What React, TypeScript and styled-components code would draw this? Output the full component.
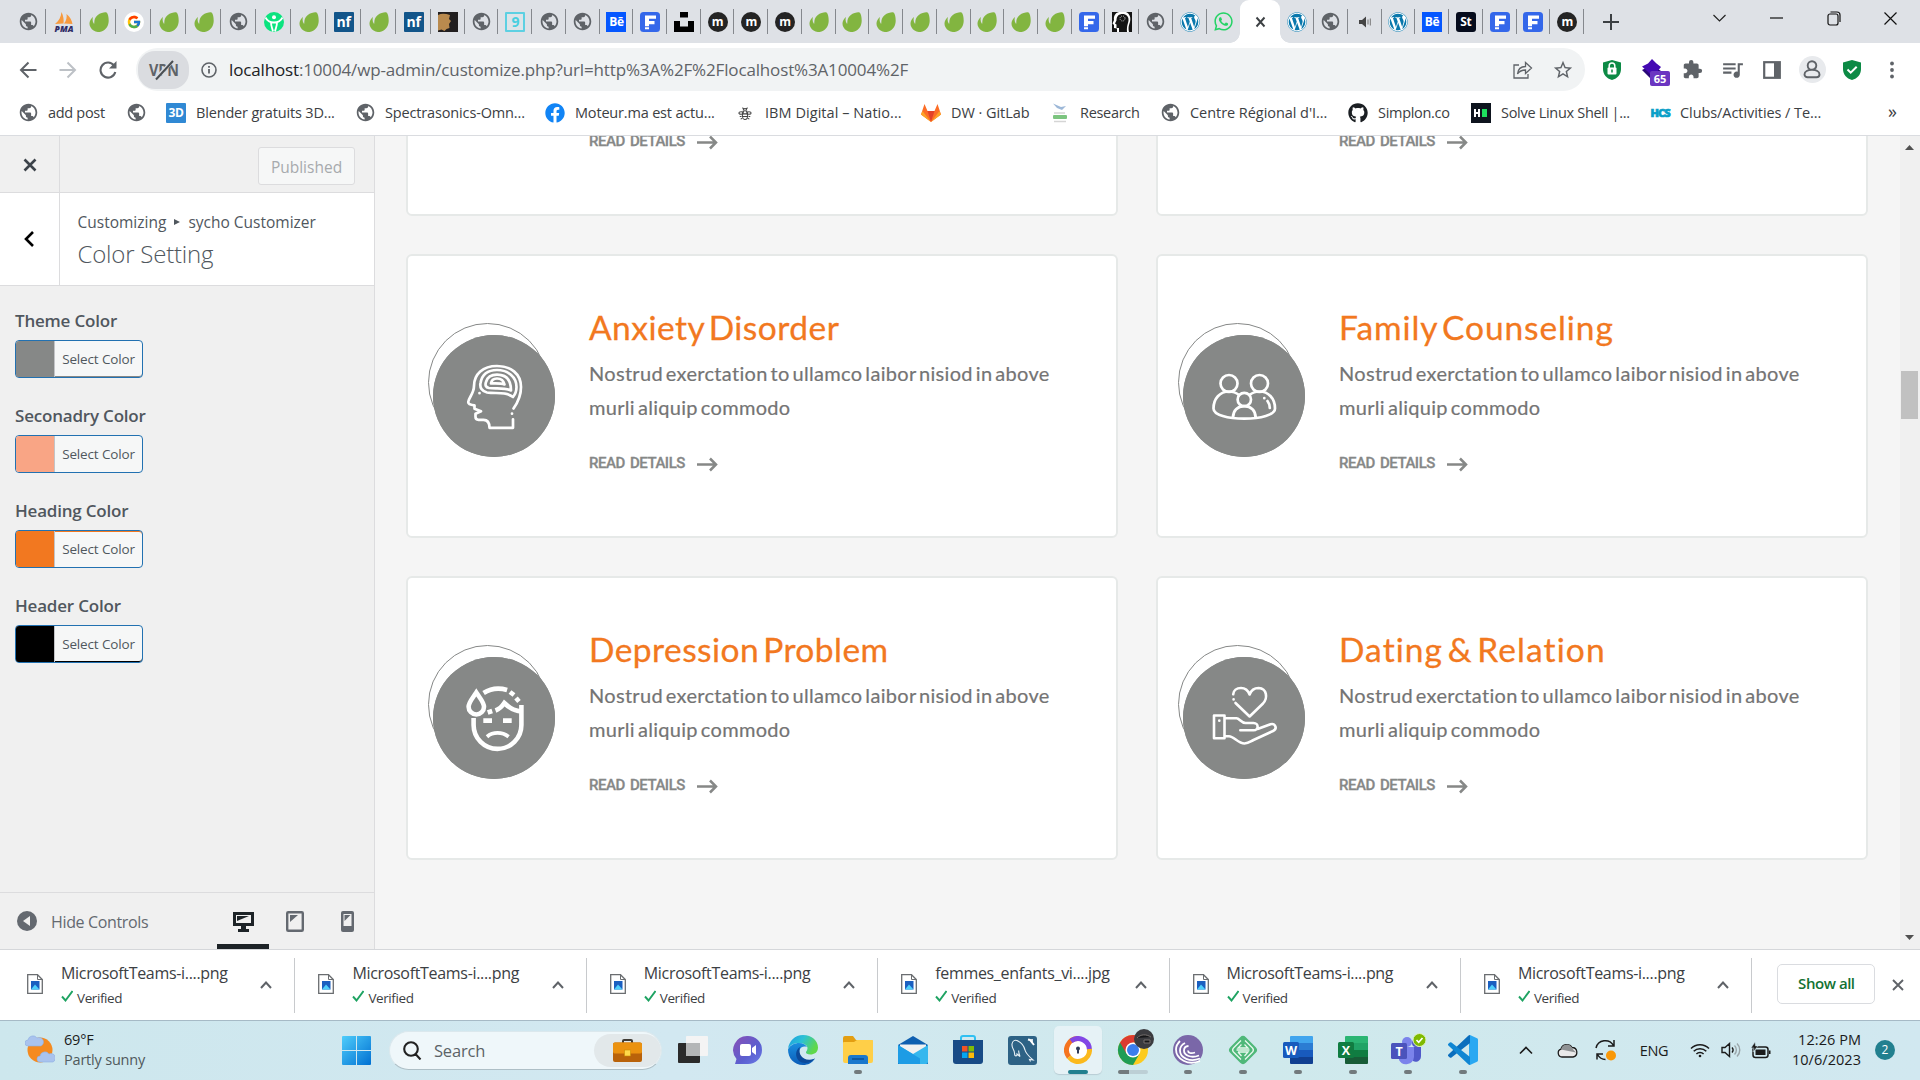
import React from 'react';
import styled, { createGlobalStyle, css } from 'styled-components';
import { MdPublic, MdExtension, MdQueueMusic, MdStarBorder } from 'react-icons/md';
import { FaWordpress, FaWhatsapp, FaGithub, FaFacebook } from 'react-icons/fa';
import { FcGoogle } from 'react-icons/fc';

const UI = `"Open Sans", "Noto Sans", sans-serif`;
const SITE = `Lato, "Open Sans", sans-serif`;

const GlobalStyle = createGlobalStyle`
  *, *::before, *::after { box-sizing: border-box; }
  body { margin: 0; background: #fff; overflow: hidden; }
  svg { display: block; flex: none; }
`;

const Screen = styled.div`
  width: 1920px;
  height: 1080px;
  display: flex;
  flex-direction: column;
  overflow: hidden;
  font-family: ${UI};
  color: #3c4043;
  white-space: nowrap;
`;

/* ---------- tab strip ---------- */

const TabStrip = styled.div`
  height: 43px;
  flex: none;
  display: flex;
  background: #dee1e6;
  padding-left: 11px;
`;

const Tab = styled.div<{ $w: number; $line?: boolean }>`
  width: ${p => p.$w}px;
  flex: none;
  height: 43px;
  display: flex;
  align-items: center;
  justify-content: center;
  background: linear-gradient(#85888d, #85888d) right 0 top 9px / ${p => (p.$line === false ? 0 : 1)}px 25px no-repeat;
`;

const ActiveTab = styled.div`
  width: 40px;
  height: 43px;
  flex: none;
  background: #fff;
  border-radius: 9px 9px 0 0;
  display: flex;
  align-items: center;
  justify-content: center;
  position: relative;
  &::before, &::after {
    content: '';
    position: absolute;
    bottom: 0;
    width: 10px;
    height: 10px;
  }
  &::before { left: -10px; background: radial-gradient(circle at 0 0, transparent 9.5px, #fff 10px); }
  &::after { right: -10px; background: radial-gradient(circle at 100% 0, transparent 9.5px, #fff 10px); }
`;

const WindowControls = styled.div`
  margin-left: auto;
  height: 36px;
  display: flex;
  align-items: center;
  padding-right: 1px;
`;
const WindowButton = styled.div`
  width: 57px;
  display: flex;
  justify-content: center;
`;
const NewTab = styled.div`
  width: 54px;
  display: flex;
  align-items: center;
  justify-content: center;
`;

const Badge = styled.div<{ $bg: string; $fg?: string; $r?: number; $fs?: number; $border?: string }>`
  width: 20px;
  height: 20px;
  flex: none;
  display: flex;
  align-items: center;
  justify-content: center;
  background: ${p => p.$bg};
  color: ${p => p.$fg || '#fff'};
  border-radius: ${p => p.$r ?? 2}px;
  font: 700 ${p => p.$fs || 12}px/18px ${UI};
  letter-spacing: -0.3px;
  ${p => p.$border && css`border: 2px solid ${p.$border};`}
`;

const Globe = () => <MdPublic size={21} color="#5f6368" />;
const Leaf = () => (
  <svg width="20" height="20" viewBox="0 0 20 20">
    <path d="M17.2.4C16 0 11.700.6 8.500 3.200 5.700 5.500 5.200 8.300 5.300 11.300c0 .4-.3.500-.5.200C3.700 10 3.300 8.200 3.800 5.700c.1-.4-.2-.5-.5-.2C.5 8.300-.4 12 1.500 15.300 3.400 18.700 7 20.500 10.700 19.900c5.300-.8 8.300-4.900 8.900-9.700C20 6.700 19.100 2 17.900.7c-.2-.2-.4-.3-.7-.3z" fill="#82b540" />
  </svg>
);
const Pma = () => (
  <svg width="22" height="20" viewBox="0 0 22 20">
    <path d="M2 12C6 9 8 5 8.500 0c2 4 2.500 8 2 11.500zM11 11.500C13.500 8.500 14 5 13.500 2 17 5 19 8.500 19.500 12z" fill="#f79a3e" />
    <text x="11" y="19.500" textAnchor="middle" fontFamily="Open Sans" fontWeight="800" fontStyle="italic" fontSize="8.500" fill="#2f2c66">PMA</text>
  </svg>
);
const Google = () => (
  <svg width="20" height="20" viewBox="0 0 20 20"><circle cx="10" cy="10" r="10" fill="#fff" /><g transform="translate(2.500 2.500)"><FcGoogle size={15} /></g></svg>
);
const GreenPerson = () => (
  <svg width="20" height="20" viewBox="0 0 20 20">
    <circle cx="10" cy="10" r="10" fill="#0be37f" />
    <g fill="none" stroke="#fff" strokeWidth="1.800"><circle cx="10" cy="5.200" r="2" fill="#fff" stroke="none" /><path d="M1.500 5.500c2 4 5 5 8.500 5s6.500-1 8.500-5M7 10.500c0 4 1.500 6 2 9M13 10.500c0 4-1.500 6-2 9" /></g>
  </svg>
);
const Paint = () => (
  <svg width="20" height="20" viewBox="0 0 20 20"><rect width="20" height="20" fill="#221f20" /><path d="M0 3c4-2 8-1 12 0l-1 4 2 2-2 3 .5 4-3 1-2 2-3-1.500-3.500 1z" fill="#b98a4e" /></svg>
);
const FBox = () => (
  <svg width="20" height="20" viewBox="0 0 20 20"><rect width="20" height="20" rx="3.500" fill="#3467ea" /><path d="M5 3.500h11v3.200H9v2.400h5.500v3.200H9v2H5zM5 15.300h4v2H5z" fill="#fff" /></svg>
);
const Unsplash = () => (
  <svg width="20" height="20" viewBox="0 0 20 20"><path d="M6 0h8v5.500H6zM0 9h6v5.500h8V9h6v11H0z" fill="#000" /></svg>
);
const HeadTile = () => (
  <svg width="20" height="20" viewBox="0 0 20 20">
    <rect width="20" height="20" fill="#fff" />
    <path d="M0 0h7C3 1 1.500 4 2 8L.5 11.500 2 13v3l3 .5V20H0zM20 0h-6c4 2 5 6 4 10-1 3-2 5-1 10h3z" fill="#151515" />
    <path d="M7 20v-4H4.500v-3.500L3 11.500l1.500-3C4.500 4 7 2 10.500 2S17 4.500 16.500 8.500c-.3 3-2 5-1.500 11.500z" fill="#151515" />
    <circle cx="10.500" cy="6.500" r="2.500" fill="none" stroke="#ccc" strokeDasharray="1 1" />
  </svg>
);
const Speaker = () => (
  <svg width="14" height="14" viewBox="0 0 14 14"><path d="M1 5h3l4-3.500v11L4 9H1z" fill="#444" /><path d="M10 4.500v5M12.300 3.500v7" stroke="#777" strokeWidth="1" /></svg>
);
const Wp = () => (
  <svg width="20" height="20" viewBox="0 0 20 20"><circle cx="10" cy="10" r="9.800" fill="#fff" /><FaWordpress size={20} color="#0a78ac" /></svg>
);
const Be = () => <Badge $bg="#0557ff" $r={0} $fs={12}>Bē</Badge>;
const MDot = () => <Badge $bg="#242424" $r={10} $fs={12}>m</Badge>;
const Nf = () => <Badge $bg="#12558a" $r={1} $fs={14}>nf</Badge>;
const Nine = () => <Badge $bg="#dde4e8" $fg="#48cfe0" $border="#5dd0e2" $r={1} $fs={14}>9</Badge>;
const St = () => <Badge $bg="#050b1c" $r={3} $fs={12}>St</Badge>;
const Whats = () => <FaWhatsapp size={21} color="#25d366" />;

const earlyTabs = [Globe, Pma, Leaf, Google, Leaf, Leaf, Globe, GreenPerson, Leaf, Nf, Leaf, Nf];
const middleTabs = [Paint, Globe, Nine, Globe, Globe, Be, FBox, Unsplash, MDot, MDot, MDot, Leaf, Leaf, Leaf, Leaf, Leaf, Leaf, Leaf, Leaf, FBox, HeadTile, Globe, Wp, Whats];
const lateTabs = [Wp, Globe, Speaker, Wp, Be, St, FBox, FBox, MDot];

/* ---------- toolbar ---------- */

const Toolbar = styled.div`
  height: 48px;
  flex: none;
  display: flex;
  align-items: center;
  padding: 5px 8px 0;
  background: #fff;
`;
const ToolButton = styled.div`
  width: 40px;
  height: 40px;
  flex: none;
  display: flex;
  align-items: center;
  justify-content: center;
  position: relative;
`;
const Omnibox = styled.div`
  width: 1449px;
  height: 43px;
  margin: 0 7px 0 8px;
  flex: none;
  border-radius: 22px;
  background: #f1f3f4;
  display: flex;
  align-items: center;
  padding: 0 2px 0 2px;
`;
const VpnPill = styled.div`
  width: 51px;
  height: 38px;
  border-radius: 17px;
  background: #dadce0;
  display: flex;
  align-items: center;
  justify-content: center;
`;
const Url = styled.div`
  flex: 1;
  font-size: 17px;
  line-height: 24px;
  letter-spacing: -0.15px;
  color: #5f6368;
  b { font-weight: 400; color: #202124; }
`;
const InfoSlot = styled.div`
  width: 40px;
  display: flex;
  justify-content: center;
`;
const Counter = styled.div`
  position: absolute;
  left: 18px;
  top: 21px;
  width: 20px;
  height: 15px;
  border-radius: 2px;
  background: #6b35c1;
  color: #fff;
  font: 700 11px/15px ${UI};
  text-align: center;
`;
const Avatar = styled.div`
  width: 27px;
  height: 27px;
  border-radius: 50%;
  background: #e8eaed;
  display: flex;
  align-items: center;
  justify-content: center;
`;

/* ---------- bookmarks ---------- */

const Bookmarks = styled.div`
  height: 45px;
  flex: none;
  display: flex;
  align-items: center;
  padding: 0 0 1px 18px;
  background: #fff;
  border-bottom: 1px solid #dadce0;
`;
const Bookmark = styled.div<{ $w: number; $ls?: number }>`
  width: ${p => p.$w}px;
  flex: none;
  display: flex;
  align-items: center;
  gap: 10px;
  font-size: 14.5px;
  line-height: 20px;
  letter-spacing: ${p => p.$ls ?? -0.3}px;
  color: #3c4043;
`;
const BookmarkIcon = styled.div`
  width: 20px;
  display: flex;
  justify-content: center;
`;
const More = styled.div`
  margin-left: auto;
  padding: 0 23px 3px 0;
  font-size: 18px;
  line-height: 20px;
  color: #3c4043;
`;

const Bee = () => (
  <svg width="14" height="16" viewBox="0 0 16 18" fill="none" stroke="#444" strokeWidth="1.200">
    <ellipse cx="8" cy="11.500" rx="3" ry="5" /><path d="M5 10h6M5 13h6M6 6a2 2 0 114 0M5 3l2 1.500M11 3L9 4.500" /><ellipse cx="3.500" cy="9" rx="2.500" ry="1.500" /><ellipse cx="12.500" cy="9" rx="2.500" ry="1.500" /><path d="M2 13h2M12 13h2M3 16l2-1M13 16l-2-1" />
  </svg>
);
const GitLab = () => (
  <svg width="20" height="18" viewBox="0 0 20 18">
    <path d="M10 18L0 10.500 3.500 0l3 7h7l3-7L20 10.500z" fill="#fc6d26" /><path d="M10 18L6.500 7h7z" fill="#e24329" /><path d="M10 18L0 10.500l1.500-3.500zM10 18l10-7.500L18.500 7z" fill="#fca326" />
  </svg>
);
const ResearchIcon = () => (
  <svg width="16" height="20" viewBox="0 0 16 20"><path d="M1 .5l8 3.500 5-1-4 4-5-2z" fill="#9db8d8" /><rect x="1" y="12" width="14" height="4" rx="1" fill="#7cc47f" /><path d="M2 10h11M2 18.500h12" stroke="#d5d5d5" strokeWidth="1.500" /></svg>
);
const HIcon = () => (
  <svg width="20" height="20" viewBox="0 0 20 20"><rect width="20" height="20" fill="#0e141e" /><path d="M4 6v8M8 6v8M4 10h4" stroke="#fff" strokeWidth="2" /><rect x="11" y="6" width="5" height="8" fill="#1ee05f" /></svg>
);
const Hcs = styled.div`
  font: 800 11px/20px ${UI};
  color: #0aa0c8;
  letter-spacing: -0.9px;
  -webkit-text-stroke: 0.7px #0aa0c8;
`;

const bookmarks: { w: number; icon: React.ReactNode; text?: string; ls?: number }[] = [
  { w: 108, icon: <Globe />, text: 'add post' },
  { w: 40, icon: <Globe /> },
  { w: 189, icon: <Badge $bg="#3089d4" $r={1} $fs={12}>3D</Badge>, text: 'Blender gratuits 3D...', ls: -0.17 },
  { w: 190, icon: <Globe />, text: 'Spectrasonics-Omn...', ls: -0.15 },
  { w: 190, icon: <FaFacebook size={20} color="#1184f5" />, text: 'Moteur.ma est actu...', ls: -0.18 },
  { w: 186, icon: <Bee />, text: 'IBM Digital – Natio...', ls: 0.05 },
  { w: 129, icon: <GitLab />, text: 'DW · GitLab', ls: -0.05 },
  { w: 110, icon: <ResearchIcon />, text: 'Research' },
  { w: 188, icon: <Globe />, text: "Centre Régional d'I...", ls: -0.05 },
  { w: 123, icon: <FaGithub size={20} color="#1b1f23" />, text: 'Simplon.co' },
  { w: 179, icon: <HIcon />, text: 'Solve Linux Shell |...' },
  { w: 180, icon: <Hcs>HCS</Hcs>, text: 'Clubs/Activities / Te...', ls: -0.07 },
];

/* ---------- customizer panel ---------- */

const Content = styled.div`
  height: 813px;
  flex: none;
  display: flex;
  overflow: hidden;
`;
const Panel = styled.aside`
  width: 375px;
  flex: none;
  display: flex;
  flex-direction: column;
  background: #f0f0f0;
  border-right: 1px solid #dcdcde;
  color: #50575e;
`;
const PanelTop = styled.div`
  height: 57px;
  flex: none;
  display: flex;
  align-items: center;
  border-bottom: 1px solid #dcdcde;
`;
const SideCell = styled.div`
  width: 60px;
  height: 100%;
  flex: none;
  display: flex;
  align-items: center;
  justify-content: center;
  border-right: 1px solid #dcdcde;
`;
const CloseCell = styled(SideCell)`
  padding: 2px 0 0 1px;
`;
const Published = styled.div`
  margin: 3px 19px 0 auto;
  width: 97px;
  height: 38px;
  border: 1px solid #dcdcde;
  border-radius: 3px;
  background: #f6f7f7;
  color: #a7aaad;
  font-size: 15.500px;
  line-height: 38px;
  text-align: center;
`;
const PanelTitle = styled.div`
  height: 93px;
  flex: none;
  display: flex;
  background: #fff;
  border-bottom: 1px solid #dcdcde;
`;
const TitleText = styled.div`
  padding: 17px 0 0 17.500px;
`;
const Crumb = styled.div`
  font-size: 15.5px;
  line-height: 24px;
  letter-spacing: 0;
  display: flex;
  align-items: center;
  gap: 8px;
`;
const PanelHeading = styled.div`
  font-size: 24px;
  line-height: 36px;
  font-weight: 300;
  letter-spacing: -0.2px;
  margin-top: 2px;
`;
const Controls = styled.div`
  flex: 1;
  padding: 23px 15px 0;
`;
const Control = styled.div`
  height: 95.600px;
`;
const ControlLabel = styled.div`
  font-size: 17px;
  line-height: 24px;
  font-weight: 600;
  letter-spacing: -0.2px;
  margin: -0.5px 0 7.5px;
`;
const ColorButton = styled.div<{ $top?: string; $bottom?: string }>`
  width: 128px;
  height: 38px;
  display: flex;
  border: 1px solid #2271b1;
  border-radius: 4px;
  overflow: hidden;
  background: #f6f7f7;
  box-shadow: inset 0 1px 0 ${p => p.$top || 'transparent'}, inset 0 -1px 0 ${p => p.$bottom || 'transparent'};
`;
const Swatch = styled.div<{ $color: string }>`
  width: 38px;
  background: ${p => p.$color};
`;
const SelectText = styled.div`
  flex: 1;
  border-left: 1px solid #c3c4c7;
  text-align: center;
  font-size: 13.500px;
  line-height: 36px;
  letter-spacing: -0.15px;
`;
const PanelFooter = styled.div`
  height: 57px;
  flex: none;
  display: flex;
  align-items: center;
  border-top: 1px solid #dcdcde;
  padding-left: 17px;
  font-size: 16px;
  color: #646970;
`;
const HideText = styled.div`
  margin: 2px auto 0 14px;
  letter-spacing: -0.35px;
`;
const Device = styled.div<{ $on?: boolean }>`
  width: 52px;
  height: 56px;
  display: flex;
  align-items: center;
  justify-content: center;
  border-bottom: 5px solid ${p => (p.$on ? '#1d2327' : 'transparent')};
  padding-top: 5px;
`;
const Devices = styled.div`
  display: flex;
  padding-right: 1px;
`;

const settings = [
  { label: 'Theme Color', color: '#868887', bottom: '#868887' },
  { label: 'Seconadry Color', color: '#f9a585' },
  { label: 'Heading Color', color: '#f27820', top: '#f27820' },
  { label: 'Header Color', color: '#000', bottom: '#000' },
];

/* ---------- site preview ---------- */

const Preview = styled.main`
  flex: 1;
  overflow: hidden;
  background: #f5f5f5;
  padding: 0 0 0 31px;
`;
const CardGrid = styled.div`
  margin-top: -204px;
  display: grid;
  grid-template-columns: 712px 712px;
  grid-auto-rows: 284px;
  gap: 38px;
`;
const Card = styled.section`
  background: #fff;
  border: 2px solid #e6e9e8;
  border-radius: 6px;
  display: flex;
  padding: 41px 0 0 25px;
`;
const Disc = styled.div`
  width: 122px;
  height: 122px;
  margin: 38px 34px 0 0;
  flex: none;
  border-radius: 50%;
  background: #868887;
  position: relative;
  &::before {
    content: '';
    position: absolute;
    z-index: 0;
    left: -5px;
    top: -12px;
    width: 119px;
    height: 119px;
    border: 1px solid #868887;
    border-radius: 50%;
  }
  svg { position: relative; border-radius: 50%; background: #868887; }
`;
const CardBody = styled.div`
  font-family: ${SITE};
`;
const CardTitle = styled.h3<{ $ls: number }>`
  margin: 0;
  font-size: 33.500px;
  line-height: 60px;
  font-weight: 400;
  color: #f27820;
  word-spacing: -5px;
  letter-spacing: ${p => p.$ls}px;
  -webkit-text-stroke: 0.3px #f27820;
`;
const CardText = styled.p`
  margin: -1px 0 0;
  width: 480px;
  white-space: pre-line;
  font-size: 20px;
  line-height: 34px;
  color: #747474;
  word-spacing: -2.500px;
  letter-spacing: 0.31px;
  -webkit-text-stroke: 0.2px #747474;
`;
const ReadMore = styled.div`
  display: flex;
  align-items: center;
  gap: 12px;
  margin-top: 22px;
  height: 34px;
  font: 500 15px/34px Roboto, sans-serif;
  letter-spacing: -0.48px;
  word-spacing: 2px;
  color: #868887;
  -webkit-text-stroke: 0.3px #868887;
  svg { margin-top: 3px; }
`;
const ScrollBar = styled.div`
  width: 20px;
  flex: none;
  background: #f0f0f0;
  display: flex;
  flex-direction: column;
  align-items: center;
  padding: 9px 1px 9px 0;
`;
const Thumb = styled.div`
  width: 17px;
  height: 48px;
  margin: 221px 0 auto;
  background: #c1c1c1;
`;

const CardArt = ({ children, w = 2.7 }: { children: React.ReactNode; w?: number }) => (
  <svg width="122" height="122" viewBox="0 0 122 122" fill="none" stroke="#fff" strokeWidth={w} strokeLinejoin="round" strokeLinecap="round">{children}</svg>
);
const BrainArt = () => (
  <CardArt>
    <path d="M80.500 73.500c5-7 7.500-14 7.500-21.500C88 39 78 31 64 31S41 39 41 51c0 7.500-5.500 12-5.800 16 0 2.500 3 3 6.300 3.300v3.500l6.500 2.500-5.500 2.500v3c0 2 1 3 3 3h5c4.500 0 6 3.500 6 8h23.500v-8.500M46.500 58v.2M79 78.500v.2" />
    <path d="M80 62c-8-6-17-3-26-4.500-5-1-7.500-5-6.500-9.500C49 39.500 55 35 64 35c11 0 19.500 7 19.500 17 0 4-1 7-3.500 10z" />
    <path d="M78 55.500c-7-3.500-15-1.500-22-2.500-3.500-.7-4-3-3-6 1.500-5 5.500-7.300 11-7.300 8.500 0 14 5 14 15.800z" />
    <path d="M71.500 49.500c-4-1.500-9-1-13.500-1 .5-4 3-5 6-5s6.500 1.500 7.500 6z" />
  </CardArt>
);
const FamilyArt = () => (
  <CardArt>
    <circle cx="46" cy="48.500" r="8.500" /><circle cx="76.500" cy="48.500" r="8.500" /><circle cx="61.300" cy="64.500" r="6.700" />
    <path d="M56 60c-3-2.500-6-3.500-10-3.500-9 0-15.500 7-15.500 17C30.500 80 45 83.700 61.300 83.700S92 80 92 73.500c0-10-6.500-17-15.500-17-4 0-7 1-10 3.500M50 82.500c0-7 4.500-11.300 11.300-11.300S72.600 75.500 72.600 82.500M81.300 63v.2M84.500 66c1.500 2 2.200 4 2.300 7" />
  </CardArt>
);
const DepressionArt = () => (
  <CardArt w={4.6}>
    <g strokeLinecap="butt" strokeLinejoin="miter">
      <path d="M43.300 35.500c-4 6-7.700 10-7.700 14.300a7.700 7.700 0 0015.400 0c0-4.300-3.700-8.300-7.700-14.300zM50.600 36c7-4.500 15-5.500 23.500-3M77 35l4 3M83 41l3 3.500M54.700 55.500l4.500-1.500M62.500 53.500c4-1.500 6.500-4 8.800-7.500 5 5 10 8 17 8.500M40.600 61v7a23.900 23.900 0 0047.800 0V48" />
      <path d="M50.300 63.600H59M70 63.600h8.700" /><path d="M54 79.700c6-5 15-5 21.600 0" strokeWidth="3.800" />
    </g>
  </CardArt>
);
const DatingArt = () => (
  <CardArt w={2.6}>
    <path d="M52.500 46l14.100 13.500L80 46.500c5-5.500 4-15-4.400-15.500-4.500 0-7.500 2.500-9 6.500-1.500-4-4.500-6.500-8.600-6.500-4.500 0-7.500 2.500-7.800 6.300M50.600 42.300v.1" />
    <path d="M31 58.500h10.500v22.700H31zM36.300 63.600v.1M41.500 61.300h12c3 0 4.500 4.700 9 4.700h8c5.500 0 5.500 7.300 0 7.300H57.300M41.500 79.200h4.500c5 0 9 7.300 15.500 7.300 4 0 6-2 9-3.500L90 74c5-2.500 2-8-2.500-6.800L74.500 72" />
  </CardArt>
);

const blurb = 'Nostrud exerctation to ullamco laibor nisiod in above\nmurli aliquip commodo';
const cards: { title: string; ls: number; art: React.ReactNode }[] = [
  { title: 'Anxiety Disorder', ls: 0.5, art: <BrainArt /> },
  { title: 'Family Counseling', ls: 0.9, art: <FamilyArt /> },
  { title: 'Anxiety Disorder', ls: 0.5, art: <BrainArt /> },
  { title: 'Family Counseling', ls: 0.9, art: <FamilyArt /> },
  { title: 'Depression Problem', ls: 0.45, art: <DepressionArt /> },
  { title: 'Dating & Relation', ls: 1.08, art: <DatingArt /> },
];

/* ---------- downloads ---------- */

const Shelf = styled.div`
  height: 71px;
  flex: none;
  display: flex;
  align-items: center;
  background: #fff;
  border-top: 1px solid #d5d7da;
  padding-left: 4px;
`;
const Download = styled.div`
  width: 291.400px;
  height: 55px;
  flex: none;
  display: flex;
  border-right: 1px solid #c8cacd;
  padding: 0 20px 0 23px;
`;
const FileIcon = styled.div`
  width: 34px;
  padding-top: 16px;
`;
const FileText = styled.div`
  flex: 1;
`;
const FileName = styled.div`
  font-size: 16px;
  line-height: 22px;
  letter-spacing: -0.32px;
  margin-top: 4px;
`;
const Verified = styled.div`
  display: flex;
  align-items: center;
  gap: 4px;
  font-size: 13.500px;
  line-height: 20px;
  letter-spacing: -0.4px;
  margin-top: 4px;
  svg { margin-top: -3px; }
`;
const ChevronSlot = styled.div`
  padding: 23px 2px 0 0;
`;
const ShowAll = styled.div`
  width: 98px;
  height: 40px;
  margin: -2px 0 0 25px;
  border: 1px solid #dadce0;
  border-radius: 5px;
  color: #137333;
  font-size: 15px;
  font-weight: 600;
  letter-spacing: -0.45px;
  line-height: 37px;
  text-align: center;
`;
const ShelfClose = styled.div`
  margin: -1px auto 0;
`;

const files = ['MicrosoftTeams-i....png', 'MicrosoftTeams-i....png', 'MicrosoftTeams-i....png', 'femmes_enfants_vi....jpg', 'MicrosoftTeams-i....png', 'MicrosoftTeams-i....png'];

/* ---------- taskbar ---------- */

const Taskbar = styled.div`
  height: 60px;
  flex: none;
  display: flex;
  align-items: center;
  background: linear-gradient(90deg, #cde7ed, #d2e8f1 35%, #cfe9ec 65%, #d1e8f0);
  border-top: 1px solid #a6bac6;
  padding-bottom: 1px;
  color: #1b1b1b;
`;
const Weather = styled.div`
  width: 342px;
  flex: none;
  padding-left: 25px;
  display: flex;
  align-items: center;
  gap: 9px;
  font-size: 14.500px;
  line-height: 20px;
  letter-spacing: -0.2px;
  span { display: block; color: #50595c; }
`;
const SearchBox = styled.div`
  width: 273px;
  flex: none;
  height: 39px;
  margin: 0 3px 0 18px;
  border-radius: 20px;
  background: #eff7fa;
  border: 1px solid #dbe8ed;
  border-bottom-color: #aebfc6;
  display: flex;
  align-items: center;
  padding-left: 13px;
  font-size: 16.500px;
  color: #5c6367;
`;
const SearchText = styled.div`
  margin: 0 auto 0 12px;
  letter-spacing: -0.2px;
`;
const Briefcase = styled.div`
  width: 67px;
  height: 33px;
  border-radius: 17px;
  background: #e2e8ea;
  display: flex;
  justify-content: center;
  align-items: center;
`;
const TaskApp = styled.div<{ $on?: boolean }>`
  width: 48px;
  height: 48px;
  margin: 0 3.500px;
  flex: none;
  border-radius: 5px;
  background: ${p => (p.$on ? '#e6f2f6' : 'transparent')};
  box-shadow: ${p => (p.$on ? '0 1px 1px #b9cdd4' : 'none')};
  display: flex;
  align-items: center;
  justify-content: center;
  position: relative;
`;
const RunMark = styled.i<{ $w: number; $c: string }>`
  position: absolute;
  left: 50%;
  bottom: 0;
  width: ${p => p.$w}px;
  height: 4px;
  border-radius: 2px;
  background: ${p => p.$c};
  transform: translateX(-50%);
`;
const Tray = styled.div`
  flex: 1;
  min-width: 0;
  display: flex;
  align-items: center;
  padding: 0 25px 0 0;
`;
const TraySlot = styled.div<{ $w: number }>`
  width: ${p => p.$w}px;
  flex: none;
  display: flex;
  justify-content: center;
  font-size: 14.500px;
  letter-spacing: -0.3px;
`;
const Clock = styled.div`
  margin-left: auto;
  text-align: right;
  font-size: 14.500px;
  line-height: 20px;
  letter-spacing: 0.05px;
`;
const Notice = styled.div`
  width: 20px;
  height: 20px;
  flex: none;
  margin-left: 14px;
  border-radius: 50%;
  background: #22808f;
  color: #fff;
  font-size: 12px;
  line-height: 19px;
  text-align: center;
`;

const TaskView = () => (
  <svg width="30" height="30" viewBox="0 0 30 30"><rect x="0" y="8" width="22" height="20" rx="1" fill="#2b2b2b" /><rect x="8" y="1" width="22" height="20" rx="1" fill="#f4f4f4" /><path d="M8 8h14v13H8z" fill="#b4b6b7" /></svg>
);
const Chat = () => (
  <svg width="30" height="30" viewBox="0 0 30 30"><defs><linearGradient id="chat" x1="0" y1="0" x2="1" y2="1"><stop offset="0" stopColor="#8a4fb5" /><stop offset=".6" stopColor="#5b5fd0" /><stop offset="1" stopColor="#6a7be6" /></linearGradient></defs><path d="M15 1a14 14 0 110 28H2l1.500-5A14 14 0 0115 1z" fill="url(#chat)" /><rect x="7" y="9" width="11" height="12" rx="2" fill="#fff" /><path d="M19 13l4-3v10l-4-3z" fill="#fff" /></svg>
);
const Edge = () => (
  <svg width="30" height="30" viewBox="0 0 30 30"><defs><linearGradient id="edgeA" x1="0" y1="0" x2="1" y2=".4"><stop offset="0" stopColor="#1b9de2" /><stop offset=".5" stopColor="#2cc1d5" /><stop offset="1" stopColor="#5fd84a" /></linearGradient><linearGradient id="edgeB" x1="0" y1="0" x2="0" y2="1"><stop offset="0" stopColor="#1a8fe0" /><stop offset="1" stopColor="#0b5cb8" /></linearGradient></defs>
    <path d="M0 14C1 6 7 0 15 0c9 0 15 6 15 12.500 0 5-4 7-7.500 7-3 0-5-1-4.500-2.500.5-1 1.500-2 1.500-4C19.500 10 15 8 11 8 6 8 2 10 0 14z" fill="url(#edgeA)" />
    <path d="M0 14.500C2 10 7 8 11 8c4 0 7 2 8 4-6-2-9 3-7 8s9 7 15 3.500C24 28 20 30 15 30 6 30 0 23 0 14.500z" fill="url(#edgeB)" /><path d="M12 12c-5 3-5 10-1 14 4 3 11 3 16-2.500-6 2.500-12 1-14.500-3.500-1.500-3-1.300-6-.5-8z" fill="#0c4a9a" /></svg>
);
const Explorer = () => (
  <svg width="30" height="28" viewBox="0 0 30 28"><path d="M0 2a2 2 0 012-2h8l3 4h15a2 2 0 012 2v8H0z" fill="#e39e12" /><path d="M0 7a1 1 0 011-1h10l3-2h15a1 1 0 011 1v20a2 2 0 01-2 2H2a2 2 0 01-2-2z" fill="#ffcf48" /><path d="M5 22a3 3 0 013-3h14a3 3 0 013 3v6H5z" fill="#1a78cd" /><path d="M9 23h12" stroke="#0b4f93" strokeWidth="1.500" /></svg>
);
const Mail = () => (
  <svg width="30" height="28" viewBox="0 0 30 28"><path d="M0 9L15 0l15 9v19H0z" fill="#0f5fb0" /><path d="M2 8.500h26V20H2z" fill="#f1f1f1" /><path d="M0 9l15 9L30 9v17a2 2 0 01-2 2H2a2 2 0 01-2-2z" fill="#35b7ee" /><path d="M0 9l22 13.500V28H2a2 2 0 01-2-2z" fill="#1d9ce5" /></svg>
);
const Store = () => (
  <svg width="30" height="30" viewBox="0 0 30 30"><path d="M8 6V3a2 2 0 012-2h10a2 2 0 012 2v3" fill="none" stroke="#2fc0f2" strokeWidth="2" /><path d="M0 5h30v21a3 3 0 01-3 3H3a3 3 0 01-3-3z" fill="#184b86" /><path d="M9 11h5.500v5.500H9z" fill="#f35325" /><path d="M15.500 11H21v5.500h-5.500z" fill="#81bc06" /><path d="M9 17.500h5.500V23H9z" fill="#05a6f0" /><path d="M15.500 17.500H21V23h-5.500z" fill="#ffba08" /></svg>
);
const MySql = () => (
  <svg width="29" height="29" viewBox="0 0 29 29"><rect width="29" height="29" rx="3" fill="#2d6285" /><path d="M4 8c.5-3.500 3-4.500 6-3 4 2 6 5 7 9 .7 3.500 3.500 6 8 10l-3.500-.5 1 2M4 8c-.5 4.500 2.500 5.500 2.500 9 0 1.500.5 3 1.500 3s1-1 1-2l3 2.500c-1-2.500-1.500-4-1.300-6" fill="none" stroke="#e8f0f5" strokeWidth="1.100" /><path d="M20 3.500l2 .5 4 5" stroke="#fff" strokeWidth="2" fill="none" /><path d="M24 3v3" stroke="#fff" strokeWidth="1.600" /></svg>
);
const Shielded = () => (
  <svg width="28" height="28" viewBox="0 0 28 28" fill="none"><circle cx="14" cy="14" r="12" fill="#fff" /><path d="M14 2.500a11.500 11.500 0 00-9 18.600" stroke="#f5741f" strokeWidth="5" /><path d="M7 5a11.500 11.500 0 0118.500 9" stroke="#8247e5" strokeWidth="5" /><path d="M25.500 13A11.500 11.500 0 015 21" stroke="#fbb91d" strokeWidth="5" /><path d="M7.500 8.500L14 6.500l6.500 2c.5 6-1.500 10.500-6.500 13.500-5-3-7-7.500-6.500-13.500z" fill="#fff" /><circle cx="14" cy="12.500" r="2" fill="#2e3a59" /><path d="M14 13v4.500" stroke="#2e3a59" strokeWidth="2" /></svg>
);
const Chrome = () => (
  <svg width="42" height="42" viewBox="0 0 42 42"><circle cx="21" cy="21" r="15" fill="#fccb1f" /><path d="M21 21L8 13.500a15 15 0 0013 22.500l6.500-11.200z" fill="#1f9d55" /><path d="M21 13.500h13A15 15 0 008 13.500l6.500 11.200z" fill="#dc3b30" /><circle cx="21" cy="21" r="7.500" fill="#fff" /><circle cx="21" cy="21" r="6" fill="#3b7ded" /><circle cx="32" cy="10" r="10" fill="#3b3b3f" /><path d="M25 9c4-4 9-4 14-1M32 11h6v3h-6z" stroke="#77716f" fill="#161618" /></svg>
);
const BitTorrent = () => (
  <svg width="30" height="30" viewBox="0 0 30 30" fill="none"><circle cx="15" cy="15" r="15" fill="#7a67a8" /><g stroke="#fff" strokeWidth="1.800"><path d="M27 26C15 31 3 24 3 14.500 3 11 5 8 7 6M27 23.500C17 27.500 7 23 7 15.500 7 12 9 9.500 12 8M26 20.500c-8 3-15 0-15-5 0-2.500 2-4.300 4.500-4.500M22 17.500c-4 1.500-7 .5-7-2" /></g></svg>
);
const GreenDiamond = () => (
  <svg width="30" height="30" viewBox="0 0 30 30" fill="none"><rect x="4" y="4" width="22" height="22" rx="4" transform="rotate(45 15 15)" fill="#4fb879" /><g stroke="#e8f7ee" strokeWidth="1.300"><path d="M13 5.500L5.500 13a3 3 0 000 4l7.500 7.500M17 5.500l7.500 7.500a3 3 0 010 4L17 24.500M13.500 9.500L10 13h10l-3.500-3.500M8.500 15h13M10 17h10l-3.500 4M10 17l3.500 4" /></g></svg>
);
const OfficeTile = ({ letter, c }: { letter: string; c: string[] }) => (
  <svg width="30" height="28" viewBox="0 0 30 28"><path d="M7 1a1 1 0 011-1h21a1 1 0 011 1v6H7z" fill={c[0]} /><path d="M7 7h23v7H7z" fill={c[1]} /><path d="M7 14h23v7H7z" fill={c[2]} /><path d="M7 21h23v6a1 1 0 01-1 1H8a1 1 0 01-1-1z" fill={c[3]} /><rect x="0" y="6" width="16" height="16" rx="1.500" fill={c[4]} /><text x="8" y="18.800" textAnchor="middle" fontFamily="Open Sans" fontWeight="700" fontSize="12.500" fill="#fff">{letter}</text></svg>
);
const Teams = () => (
  <svg width="38" height="34" viewBox="0 0 38 34"><circle cx="18" cy="9" r="5" fill="#7b83eb" /><circle cx="27" cy="10" r="4" fill="#5059c9" /><path d="M22 14h10v9c0 5-5 7-8 5z" fill="#5059c9" /><path d="M10 14h15v10a8 8 0 01-15 3z" fill="#7b83eb" /><rect x="2" y="10" width="16" height="16" rx="1.500" fill="#4b53bc" /><text x="10" y="22.500" textAnchor="middle" fontFamily="Open Sans" fontWeight="700" fontSize="12.500" fill="#fff">T</text><circle cx="30.500" cy="7" r="6.500" fill="#7fba00" stroke="#dff0c4" /><path d="M27.500 7l2.200 2.300L33.500 5" fill="none" stroke="#fff" strokeWidth="1.700" /></svg>
);
const VsCode = () => (
  <svg width="30" height="30" viewBox="0 0 30 30"><path d="M22 0l7 3.300a1.500 1.500 0 011 1.400v20.600a1.500 1.500 0 01-1 1.400L22 30l-1-1V1z" fill="#2aa8f2" /><path d="M22 0v8L3.500 22.500a1.300 1.300 0 01-1.700 0L.4 21.200a1.200 1.200 0 010-1.800L20.500.6z" fill="#0a6ebd" /><path d="M22 30v-8L3.500 7.500a1.300 1.300 0 00-1.700 0L.4 8.800a1.200 1.200 0 000 1.800l20.100 18.800z" fill="#0f86d3" /></svg>
);

const GREY = '#727a7d';
const apps: { icon: React.ReactNode; mark?: 'dot' | 'on' | 'multi' }[] = [
  { icon: <TaskView /> },
  { icon: <Chat /> },
  { icon: <Edge /> },
  { icon: <Explorer />, mark: 'dot' },
  { icon: <Mail /> },
  { icon: <Store /> },
  { icon: <MySql /> },
  { icon: <Shielded />, mark: 'on' },
  { icon: <Chrome />, mark: 'multi' },
  { icon: <BitTorrent />, mark: 'dot' },
  { icon: <GreenDiamond />, mark: 'dot' },
  { icon: <OfficeTile letter="W" c={['#41a5ee', '#2b7cd3', '#185abd', '#103f91', '#185abd']} />, mark: 'dot' },
  { icon: <OfficeTile letter="X" c={['#2bb573', '#21a366', '#107c41', '#185c37', '#107c41']} />, mark: 'dot' },
  { icon: <Teams />, mark: 'dot' },
  { icon: <VsCode />, mark: 'dot' },
];

const Line = ({ d, w = 20, h = 20, s = 2, c = '#5f6368', fill = 'none' }: { d: string; w?: number; h?: number; s?: number; c?: string; fill?: string }) => (
  <svg width={w} height={h} viewBox={`0 0 ${w} ${h}`} fill={fill} stroke={c} strokeWidth={s}><path d={d} /></svg>
);

export default function App() {
  return (
    <Screen>
      <GlobalStyle />
      <TabStrip>
        {earlyTabs.map((I, i) => <Tab key={i} $w={35}><I /></Tab>)}
        {middleTabs.map((I, i) => <Tab key={i} $w={33.72} $line={i !== 23}><I /></Tab>)}
        <ActiveTab><Line d="M1.500 1.500l8 9M9.500 1.500l-8 9" w={11} h={12} c="#3c4043" s={1.900} /></ActiveTab>
        {lateTabs.map((I, i) => <Tab key={i} $w={33.750}><I /></Tab>)}
        <NewTab><Line d="M8 0v16M0 8h16" w={16} h={16} c="#3c4043" s={2} /></NewTab>
        <WindowControls>
          <WindowButton><Line d="M.5 1l6 6 6-6" w={13} h={8} c="#222" s={1.200} /></WindowButton>
          <WindowButton><Line d="M0 1h13" w={13} h={2} c="#111" s={1.200} /></WindowButton>
          <WindowButton><Line d="M1 5a2 2 0 012-2h6a2 2 0 012 2v7a2 2 0 01-2 2H3a2 2 0 01-2-2zM3.500 1H10a3 3 0 013 3v7" w={14} h={15} c="#111" s={1.200} /></WindowButton>
          <WindowButton><Line d="M.5.5l12 12M12.500.5l-12 12" w={13} h={13} c="#111" s={1.200} /></WindowButton>
        </WindowControls>
      </TabStrip>

      <Toolbar>
        <ToolButton><Line d="M17.500 9H2M9.500 1.500L2 9l7.500 7.500" w={18} h={18} /></ToolButton>
        <ToolButton><Line d="M.5 9H16M8.500 1.500L16 9l-7.500 7.500" w={18} h={18} c="#bdc1c6" /></ToolButton>
        <ToolButton><svg width="18" height="18" viewBox="0 0 18 18"><path d="M15 4.500A7.500 7.500 0 1016.300 11" fill="none" stroke="#5f6368" strokeWidth="2.100" /><path d="M17.500 0v7.500H10z" fill="#5f6368" /></svg></ToolButton>
        <Omnibox>
          <VpnPill>
            <svg width="32" height="22" viewBox="0 0 32 22"><text x="16" y="17" textAnchor="middle" fontFamily="Open Sans" fontWeight="700" fontSize="15.500" textLength="30" lengthAdjust="spacingAndGlyphs" fill="#5f6368">VPN</text><path d="M8.500 19L24.500 2" stroke="#dadce0" strokeWidth="4" /><path d="M8 20.500L25 2" stroke="#4a4e52" strokeWidth="2" /></svg>
          </VpnPill>
          <InfoSlot><svg width="16" height="16" viewBox="0 0 16 16"><circle cx="8" cy="8" r="7" fill="none" stroke="#5f6368" strokeWidth="1.600" /><path d="M8 7v4.500M8 4v1.700" stroke="#5f6368" strokeWidth="1.800" /></svg></InfoSlot>
          <Url><b>localhost</b>:10004/wp-admin/customize.php?url=http%3A%2F%2Flocalhost%3A10004%2F</Url>
          <ToolButton><Line d="M6 5H1v13h14v-4M4.500 14c.5-5 3-7.500 8-7.500V2.500L18.500 8l-6 5.500V10c-4 0-6 1-8 4z" w={20} h={20} s={1.300} /></ToolButton>
          <ToolButton><MdStarBorder size={22} color="#5f6368" /></ToolButton>
        </Omnibox>
        <ToolButton><svg width="18" height="20" viewBox="0 0 18 20"><path d="M9 0l9 2.500V9c0 5.500-3.500 9.500-9 11-5.500-1.500-9-5.500-9-11V2.500z" fill="#0c8a45" /><rect x="4.500" y="7.500" width="9" height="7" rx="1" fill="#fff" /><path d="M6.200 8V5.800a2.800 2.800 0 015.600 0V8" fill="none" stroke="#fff" strokeWidth="1.500" /><path d="M9 9.500v3" stroke="#0c8a45" strokeWidth="1.500" /></svg></ToolButton>
        <ToolButton>
          <svg width="22" height="22" viewBox="0 0 22 22"><path d="M1 11l10 10 9-9-9-6z" fill="#2a0878" /><path d="M11 0l4.500 4.500L20 8l-4.500 5.500L11 17l-4.500-4.500L1 7.500l6-3z" fill="#4409b3" /></svg>
          <Counter>65</Counter>
        </ToolButton>
        <ToolButton><MdExtension size={21} color="#5f6368" /></ToolButton>
        <ToolButton><MdQueueMusic size={25} color="#5f6368" /></ToolButton>
        <ToolButton><svg width="18" height="18" viewBox="0 0 18 18"><rect x="1.200" y="1.200" width="15.600" height="15.600" fill="#fff" stroke="#5f6368" strokeWidth="2.200" /><path d="M11 1h6v16h-6z" fill="#5f6368" /></svg></ToolButton>
        <ToolButton><Avatar><Line d="M9 1.200a4.300 4.300 0 110 8.600 4.300 4.300 0 010-8.600zM1.500 14.500c0-3 3.500-4.700 7.500-4.700s7.500 1.700 7.500 4.700c0 1.800-1.500 2.700-3 2.700h-9c-1.500 0-3-.9-3-2.700z" w={18} h={19} s={1.900} /></Avatar></ToolButton>
        <ToolButton><svg width="18" height="20" viewBox="0 0 18 20"><path d="M9 0l9 2.500V9c0 5.500-3.500 9.500-9 11-5.500-1.500-9-5.500-9-11V2.500z" fill="#0c8a45" /><path d="M4.500 9.500l3.200 3.200 6-6" fill="none" stroke="#fff" strokeWidth="2" /></svg></ToolButton>
        <ToolButton><svg width="6" height="18" viewBox="0 0 6 18" fill="#5f6368"><circle cx="3" cy="2.500" r="1.900" /><circle cx="3" cy="9" r="1.900" /><circle cx="3" cy="15.500" r="1.900" /></svg></ToolButton>
      </Toolbar>

      <Bookmarks>
        {bookmarks.map((b, i) => (
          <Bookmark key={i} $w={b.w} $ls={b.ls}><BookmarkIcon>{b.icon}</BookmarkIcon>{b.text}</Bookmark>
        ))}
        <More>»</More>
      </Bookmarks>

      <Content>
        <Panel>
          <PanelTop>
            <CloseCell><Line d="M1.500 1.500l11 11M12.500 1.500l-11 11" w={14} h={14} c="#3c434a" s={2.600} /></CloseCell>
            <Published>Published</Published>
          </PanelTop>
          <PanelTitle>
            <SideCell><Line d="M9 1L2 8l7 7" w={11} h={16} c="#000" s={2.600} /></SideCell>
            <TitleText>
              <Crumb>Customizing<Line d="M0 0l6 3-6 3z" w={6} h={6} s={0} fill="#50575e" /><span>sycho Customizer</span></Crumb>
              <PanelHeading>Color Setting</PanelHeading>
            </TitleText>
          </PanelTitle>
          <Controls>
            {settings.map(s => (
              <Control key={s.label}>
                <ControlLabel>{s.label}</ControlLabel>
                <ColorButton $top={s.top} $bottom={s.bottom}><Swatch $color={s.color} /><SelectText>Select Color</SelectText></ColorButton>
              </Control>
            ))}
          </Controls>
          <PanelFooter>
            <svg width="20" height="20" viewBox="0 0 20 20"><circle cx="10" cy="10" r="10" fill="#646970" /><path d="M13 5v10l-7-5z" fill="#f0f0f0" /></svg>
            <HideText>Hide Controls</HideText>
            <Devices>
              <Device $on><svg width="21" height="21" viewBox="0 0 21 21"><path d="M0 1h21v14h-8v3h3v3H5v-3h3v-3H0z" fill="#1d2327" /><path d="M3 4h15v8H3z" fill="#f0f0f0" /><path d="M4 5h12L4 10z" fill="#1d2327" /></svg></Device>
              <Device><svg width="18" height="21" viewBox="0 0 18 21"><rect x="1.200" y="1.200" width="15.600" height="18.600" rx="1" fill="none" stroke="#646970" strokeWidth="2.400" /><path d="M4 4h8l-8 7z" fill="#646970" /></svg></Device>
              <Device><svg width="13" height="21" viewBox="0 0 13 21"><rect width="13" height="21" rx="2" fill="#646970" /><path d="M2.500 3h8v12h-8z" fill="#f0f0f0" /><path d="M3.500 4h6l-6 6z" fill="#646970" /></svg></Device>
            </Devices>
          </PanelFooter>
        </Panel>
        <Preview>
          <CardGrid>
            {cards.map((c, i) => (
              <Card key={i}>
                <Disc>{c.art}</Disc>
                <CardBody>
                  <CardTitle $ls={c.ls}>{c.title}</CardTitle>
                  <CardText>{blurb}</CardText>
                  <ReadMore>READ DETAILS<Line d="M0 7.500h19M13 1.500l6 6-6 6" w={21} h={15} s={2.500} c="#868887" /></ReadMore>
                </CardBody>
              </Card>
            ))}
          </CardGrid>
        </Preview>
        <ScrollBar>
          <Line d="M0 5l4.500-5L9 5z" w={9} h={5} s={0} fill="#505050" />
          <Thumb />
          <Line d="M0 0l4.500 5L9 0z" w={9} h={5} s={0} fill="#505050" />
        </ScrollBar>
      </Content>

      <Shelf>
        {files.map((f, i) => (
          <Download key={i}>
            <FileIcon><svg width="16" height="20" viewBox="0 0 16 20"><path d="M.7.700H10.500L15.300 5.500v13.800H.7z" fill="#fff" stroke="#6a6d70" strokeWidth="1.300" /><path d="M10.500.7v4.800h4.800" fill="none" stroke="#6a6d70" /><rect x="4" y="7" width="8.500" height="8.500" fill="#1b5fc0" /><path d="M4 15.500l4-5 4.500 5z" fill="#4fd0fb" /></svg></FileIcon>
            <FileText>
              <FileName>{f}</FileName>
              <Verified><Line d="M1 6.500l3.500 4L11.500 1" w={12} h={12} c="#1ea362" s={1.900} />Verified</Verified>
            </FileText>
            <ChevronSlot><Line d="M1 7l5-5.500L11 7" w={12} h={8} s={2} /></ChevronSlot>
          </Download>
        ))}
        <ShowAll>Show all</ShowAll>
        <ShelfClose><Line d="M1 1l10 10M11 1L1 11" w={12} h={12} s={1.900} /></ShelfClose>
      </Shelf>

      <Taskbar>
        <Weather>
          <svg width="30" height="30" viewBox="0 0 30 30"><circle cx="15" cy="15" r="12.500" fill="#f58a1f" /><path d="M3 11a3 3 0 010-6 5 5 0 019-2 4 4 0 014 8zM15 27a3 3 0 010-6 5 5 0 019-2 4 4 0 014 8z" fill="#a9c3ee" stroke="#8eaee2" strokeWidth=".6" /></svg>
          <div>69°F<span>Partly sunny</span></div>
        </Weather>
        <svg width="29" height="29" viewBox="0 0 29 29"><defs><linearGradient id="win" x1="0" y1="0" x2="1" y2="1"><stop offset="0" stopColor="#4fcdfb" /><stop offset="1" stopColor="#0070d2" /></linearGradient></defs><path d="M1 0h13v14H0V1a1 1 0 011-1zM15 0h13a1 1 0 011 1v13H15zM0 15h14v14H1a1 1 0 01-1-1zM15 15h14v13a1 1 0 01-1 1H15z" fill="url(#win)" /></svg>
        <SearchBox>
          <Line d="M8 1.200a6.800 6.800 0 110 13.600A6.800 6.800 0 018 1.200zM12.500 13l5 5.500" w={19} h={19} c="#222" s={2.100} />
          <SearchText>Search</SearchText>
          <Briefcase><svg width="29" height="23" viewBox="0 0 29 23"><path d="M10 4V2a1 1 0 011-1h7a1 1 0 011 1v2" fill="none" stroke="#3f3a34" strokeWidth="2" /><rect y="3.500" width="29" height="19.500" rx="2" fill="#b9620a" /><path d="M0 5.500a2 2 0 012-2h25a2 2 0 012 2V13a2 2 0 01-2 1.500H2A2 2 0 010 13z" fill="#eb9210" /><rect x="11.500" y="11" width="6" height="6" fill="#ffd94a" stroke="#c98a00" strokeWidth=".6" /></svg></Briefcase>
        </SearchBox>
        {apps.map((a, i) => (
          <TaskApp key={i} $on={a.mark === 'on'}>
            {a.icon}
            {a.mark === 'dot' && <RunMark $w={8} $c={GREY} />}
            {a.mark === 'on' && <RunMark $w={20} $c="#22808f" />}
            {a.mark === 'multi' && <RunMark $w={30} $c={`linear-gradient(90deg, ${GREY} 11px, #bccfd5 11px)`} />}
          </TaskApp>
        ))}
        <Tray>
          <TraySlot $w={72}><Line d="M1 7.500L7 1.500l6 6" w={14} h={9} c="#1b1b1b" s={1.600} /></TraySlot>
          <TraySlot $w={10}><svg width="21" height="15" viewBox="0 0 21 15"><path d="M5 14a4 4 0 01-1-7.800A6 6 0 0115 4.500 4.800 4.800 0 0116 14z" fill="#e9e9e9" stroke="#1b1b1b" strokeWidth="1.300" /><path d="M4 6.500A6 6 0 0115 4.500c1 2 3 4 4 5z" fill="#8f9294" /></svg></TraySlot>
          <TraySlot $w={67.500}><svg width="22" height="22" viewBox="0 0 22 22" fill="none" stroke="#1b1b1b" strokeWidth="1.500"><path d="M1 9a9.500 9.500 0 0117.500-2.500M19 1v6h-6M2 20.500V15h6M2.500 15.500c2 3.500 4.500 5 8 5" /><circle cx="16" cy="16.500" r="5" fill="#f99808" stroke="none" /></svg></TraySlot>
          <TraySlot $w={29}>ENG</TraySlot>
          <TraySlot $w={63}><svg width="20" height="16" viewBox="0 0 20 16" fill="none" stroke="#1b1b1b" strokeWidth="1.500"><path d="M1 6.500a12.500 12.500 0 0118 0M3.700 9.300a8.800 8.800 0 0112.600 0M6.400 12a5 5 0 017.200 0" /><circle cx="10" cy="14" r="1.300" fill="#1b1b1b" stroke="none" /></svg></TraySlot>
          <TraySlot $w={0}><svg width="21" height="16" viewBox="0 0 21 16" fill="none" stroke="#1b1b1b" strokeWidth="1.400"><path d="M1 5.500h3L8.500 1.500v13L4 10.500H1zM11 5.500c1.300 1.500 1.300 3.500 0 5" /><path d="M13.500 3.500c2.500 2.500 2.500 6.500 0 9M16 1.500c3.700 3.700 3.700 9.300 0 13" stroke="#9aa5a9" /></svg></TraySlot>
          <TraySlot $w={58}><svg width="20" height="17" viewBox="0 0 20 17"><rect x="2" y="5" width="15" height="10.500" rx="2.500" fill="none" stroke="#1b1b1b" strokeWidth="1.500" /><rect x="4.500" y="7.500" width="10" height="5.500" fill="#1b1b1b" /><path d="M18 8.500h1.500v3.500H18z" fill="#1b1b1b" /><path d="M4 0L0 6h3L2 10l5-6H4.500z" fill="#1b1b1b" stroke="#d1e8f0" strokeWidth=".5" /></svg></TraySlot>
          <Clock>12:26 PM<br />10/6/2023</Clock>
          <Notice>2</Notice>
        </Tray>
      </Taskbar>
    </Screen>
  );
}
